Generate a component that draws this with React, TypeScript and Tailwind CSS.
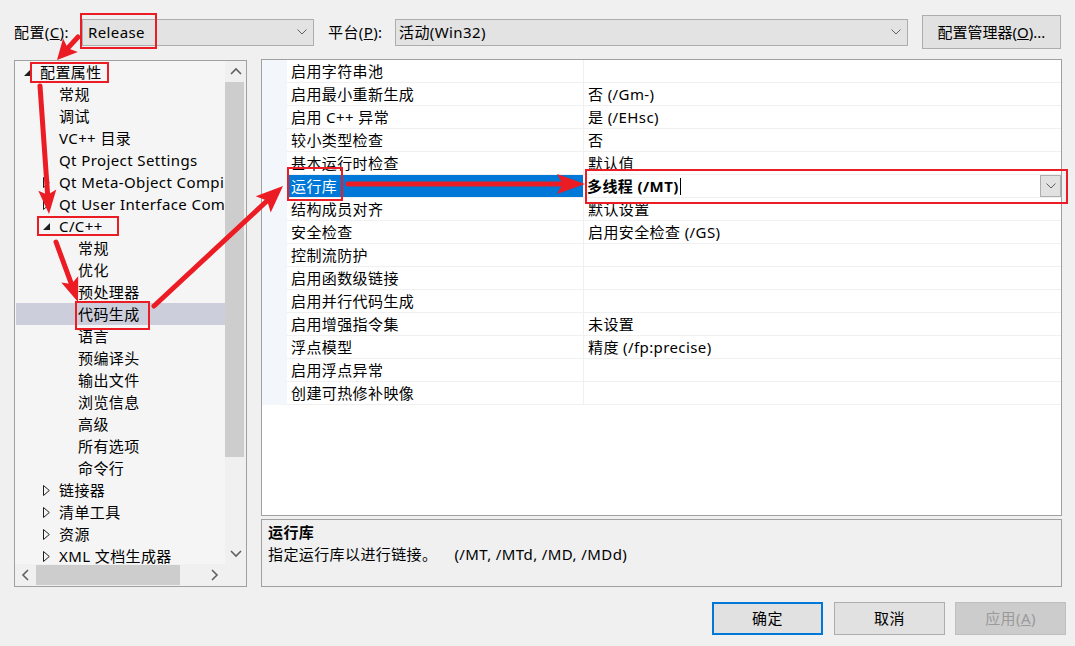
import React from "react";

const RED = "#ec1c24";

type TreeItem = { t: string; l: 0 | 1 | 2; e?: "open" | "closed"; sel?: boolean };

const tree: TreeItem[] = [
  { t: "配置属性", l: 0, e: "open" },
  { t: "常规", l: 1 },
  { t: "调试", l: 1 },
  { t: "VC++ 目录", l: 1 },
  { t: "Qt Project Settings", l: 1 },
  { t: "Qt Meta-Object Compiler", l: 1, e: "closed" },
  { t: "Qt User Interface Compiler", l: 1, e: "closed" },
  { t: "C/C++", l: 1, e: "open" },
  { t: "常规", l: 2 },
  { t: "优化", l: 2 },
  { t: "预处理器", l: 2 },
  { t: "代码生成", l: 2, sel: true },
  { t: "语言", l: 2 },
  { t: "预编译头", l: 2 },
  { t: "输出文件", l: 2 },
  { t: "浏览信息", l: 2 },
  { t: "高级", l: 2 },
  { t: "所有选项", l: 2 },
  { t: "命令行", l: 2 },
  { t: "链接器", l: 1, e: "closed" },
  { t: "清单工具", l: 1, e: "closed" },
  { t: "资源", l: 1, e: "closed" },
  { t: "XML 文档生成器", l: 1, e: "closed" },
  { t: "浏览信息", l: 1, e: "closed" },
];

const indent: Record<number, string> = { 0: "pl-[9px]", 1: "pl-[28px]", 2: "pl-[47px]" };

const props: [string, string][] = [
  ["启用字符串池", ""],
  ["启用最小重新生成", "否 (/Gm-)"],
  ["启用 C++ 异常", "是 (/EHsc)"],
  ["较小类型检查", "否"],
  ["基本运行时检查", "默认值"],
  ["运行库", "多线程 (/MT)"],
  ["结构成员对齐", "默认设置"],
  ["安全检查", "启用安全检查 (/GS)"],
  ["控制流防护", ""],
  ["启用函数级链接", ""],
  ["启用并行代码生成", ""],
  ["启用增强指令集", "未设置"],
  ["浮点模型", "精度 (/fp:precise)"],
  ["启用浮点异常", ""],
  ["创建可热修补映像", ""],
];

function ChevronDown({ color = "#606060" }: { color?: string }) {
  return (
    <svg width="10" height="6" viewBox="0 0 10 6">
      <path d="M0.5 0.5 L5 5 L9.5 0.5" fill="none" stroke={color} strokeWidth="1" />
    </svg>
  );
}

function Chev({ dir }: { dir: "up" | "down" | "left" | "right" }) {
  const d: Record<string, string> = {
    up: "M1 7 L6 2 L11 7",
    down: "M1 2 L6 7 L11 2",
    left: "M7 1 L2 6 L7 11",
    right: "M2 1 L7 6 L2 11",
  };
  const vert = dir === "up" || dir === "down";
  return (
    <svg width={vert ? 12 : 9} height={vert ? 9 : 12} viewBox={vert ? "0 0 12 9" : "0 0 9 12"}>
      <path d={d[dir]} fill="none" stroke="#606060" strokeWidth="1.6" />
    </svg>
  );
}

function Expander({ e }: { e?: "open" | "closed" }) {
  if (e === "open")
    return (
      <svg width="7" height="7" viewBox="0 0 7 7">
        <polygon points="7,0 7,7 0,7" fill="#1e1e1e" />
      </svg>
    );
  if (e === "closed")
    return (
      <svg width="7" height="11" viewBox="0 0 7 11">
        <polygon points="0.5,0.5 6.3,5.5 0.5,10.5" fill="none" stroke="#1e1e1e" strokeWidth="1" />
      </svg>
    );
  return null;
}

function Arrow({ x1, y1, x2, y2, hl = 25, hw = 11 }: { x1: number; y1: number; x2: number; y2: number; hl?: number; hw?: number }) {
  const dx = x2 - x1;
  const dy = y2 - y1;
  const len = Math.hypot(dx, dy);
  const ux = dx / len;
  const uy = dy / len;
  const bx = x2 - ux * hl;
  const by = y2 - uy * hl;
  const px = -uy;
  const py = ux;
  const nx = x2 - ux * (hl * 0.8);
  const ny = y2 - uy * (hl * 0.8);
  return (
    <g>
      <line x1={x1} y1={y1} x2={nx} y2={ny} stroke={RED} strokeWidth={5} strokeLinecap="round" />
      <polygon
        points={`${x2},${y2} ${bx + px * hw},${by + py * hw} ${nx},${ny} ${bx - px * hw},${by - py * hw}`}
        fill={RED}
      />
    </g>
  );
}

export default function App() {
  return (
    <div className="relative w-[1075px] h-[646px] overflow-hidden bg-[#f0f0f0] text-[15px] tracking-[0.4px] text-black font-['Noto_Sans','Noto_Sans_CJK_SC',sans-serif]">
      {/* Top bar */}
      <div className="flex items-center pt-[15px] pl-[14px] h-[49px]">
        <div className="w-[68px] leading-[20px]">
          配置(<span className="underline">C</span>):
        </div>
        <div className="flex items-center justify-between w-[232px] h-[27px] border border-[#adadad] bg-[#e3e3e3] pl-[5px] pr-[6px]">
          <span>Release</span>
          <ChevronDown />
        </div>
        <div className="ml-[14px] w-[67px]">
          平台(<span className="underline">P</span>):
        </div>
        <div className="flex items-center justify-between w-[513px] h-[27px] border border-[#adadad] bg-[#e3e3e3] pl-[3px] pr-[6px]">
          <span>活动(Win32)</span>
          <ChevronDown />
        </div>
        <div className="ml-[14px] flex items-center justify-center w-[139px] h-[34px] border border-[#adadad] bg-[#e1e1e1] tracking-normal">
          配置管理器(<span className="underline">O</span>)...
        </div>
      </div>

      {/* Main */}
      <div className="flex gap-[14px] pl-[14px] mt-[10px]">
        {/* Tree */}
        <div className="mt-px w-[233px] h-[527px] border border-[#a0a0a0] bg-[#f5f5f5] flex flex-col">
          <div className="flex h-[503px]">
            <div className="w-[210px] overflow-hidden whitespace-nowrap">
              {tree.map((it, i) => (
                <div
                  key={i}
                  className={`flex items-center h-[22px] ${indent[it.l]} ${it.sel ? "bg-[#cccedb] ml-px" : ""}`}
                >
                  <div className={`w-[16px] shrink-0 flex items-center ${it.sel ? "-ml-px" : ""}`}>
                    <Expander e={it.e} />
                  </div>
                  <span className="shrink-0 leading-[22px]">{it.t}</span>
                </div>
              ))}
            </div>
            <div className="w-[21px] bg-[#f0f0f0] flex flex-col items-center">
              <div className="h-[21px] flex items-center justify-center">
                <Chev dir="up" />
              </div>
              <div className="w-[19px] h-[375px] bg-[#cdcdcd] mr-[2px]" />
              <div className="flex-1" />
              <div className="h-[21px] flex items-center justify-center">
                <Chev dir="down" />
              </div>
            </div>
          </div>
          <div className="flex h-[22px] bg-[#f0f0f0]">
            <div className="w-[21px] flex items-center justify-center">
              <Chev dir="left" />
            </div>
            <div className="w-[144px] h-[20px] mt-px bg-[#cdcdcd]" />
            <div className="w-[24px]" />
            <div className="w-[21px] flex items-center justify-center">
              <Chev dir="right" />
            </div>
            <div className="w-[21px]" />
          </div>
        </div>

        {/* Right */}
        <div className="flex flex-col">
          <div className="w-[801px] h-[457px] border border-[#a0a0a0] bg-white">
            {props.map(([n, v], i) => {
              const sel = n === "运行库";
              return (
                <div key={i} className="flex h-[23px]">
                  <div className="w-[25px] shrink-0 bg-[#f3f6fb]" />
                  <div
                    className={`w-[297px] shrink-0 pl-[4px] leading-[22px] border-b border-r border-[#f0f0f0] whitespace-nowrap ${
                      sel ? "bg-[#0078d7] text-white" : ""
                    }`}
                  >
                    {n}
                  </div>
                  {sel ? (
                    <div className="flex-1 flex items-center justify-between pl-[3px] border-b border-[#f0f0f0]">
                      <div className="flex items-center">
                        <span className="font-bold leading-[22px]">{v}</span>
                        <span className="ml-[1px] w-px h-[17px] bg-black" />
                      </div>
                      <div className="w-[21px] h-[22px] border border-[#adadad] bg-[#e1e1e1] flex items-center justify-center">
                        <ChevronDown />
                      </div>
                    </div>
                  ) : (
                    <div className="flex-1 pl-[4px] leading-[22px] border-b border-[#f0f0f0] whitespace-nowrap">{v}</div>
                  )}
                </div>
              );
            })}
          </div>
          <div className="mt-[3px] w-[801px] h-[68px] border border-[#a0a0a0] bg-[#f0f0f0] pl-[6px] pt-px">
            <div className="font-bold leading-[22px]">运行库</div>
            <div className="leading-[22px] whitespace-nowrap">
              指定运行库以进行链接。<span className="ml-[17px]">(/MT, /MTd, /MD, /MDd)</span>
            </div>
          </div>
        </div>
      </div>

      {/* Buttons */}
      <div className="flex justify-end gap-[11px] pr-[9px] mt-[15px]">
        <div className="w-[111px] h-[33px] border-2 border-[#0078d7] bg-[#e1e1e1] flex items-center justify-center">
          确定
        </div>
        <div className="w-[111px] h-[33px] border border-[#adadad] bg-[#e1e1e1] flex items-center justify-center">
          取消
        </div>
        <div className="w-[111px] h-[33px] border border-[#bfbfbf] bg-[#cccccc] text-[#9a9a9a] flex items-center justify-center -ml-px">
          应用(<span className="underline">A</span>)
        </div>
      </div>

      {/* Annotations */}
      <svg className="absolute left-0 top-0 pointer-events-none" width="1075" height="646" viewBox="0 0 1075 646">
        <g fill="none" stroke={RED} strokeWidth="2">
          <rect x="81" y="14" width="75" height="34" />
          <rect x="31" y="63" width="77" height="19" />
          <rect x="38" y="217" width="80" height="18" />
          <rect x="76" y="302" width="73" height="27" />
          <rect x="288" y="168" width="54" height="32" />
          <rect x="586" y="170" width="481" height="33" />
        </g>
        <Arrow x1={78} y1={37} x2={57} y2={60} hl={20} hw={10} />
        <Arrow x1={40} y1={86} x2={49} y2={214} hl={24} hw={9} />
        <Arrow x1={56} y1={242} x2={78} y2={302} hl={24} hw={9} />
        <Arrow x1={154} y1={306} x2={283} y2={186} hl={27} hw={11} />
        <Arrow x1={348} y1={184} x2={585} y2={184} hl={28} hw={10} />
      </svg>
    </div>
  );
}
